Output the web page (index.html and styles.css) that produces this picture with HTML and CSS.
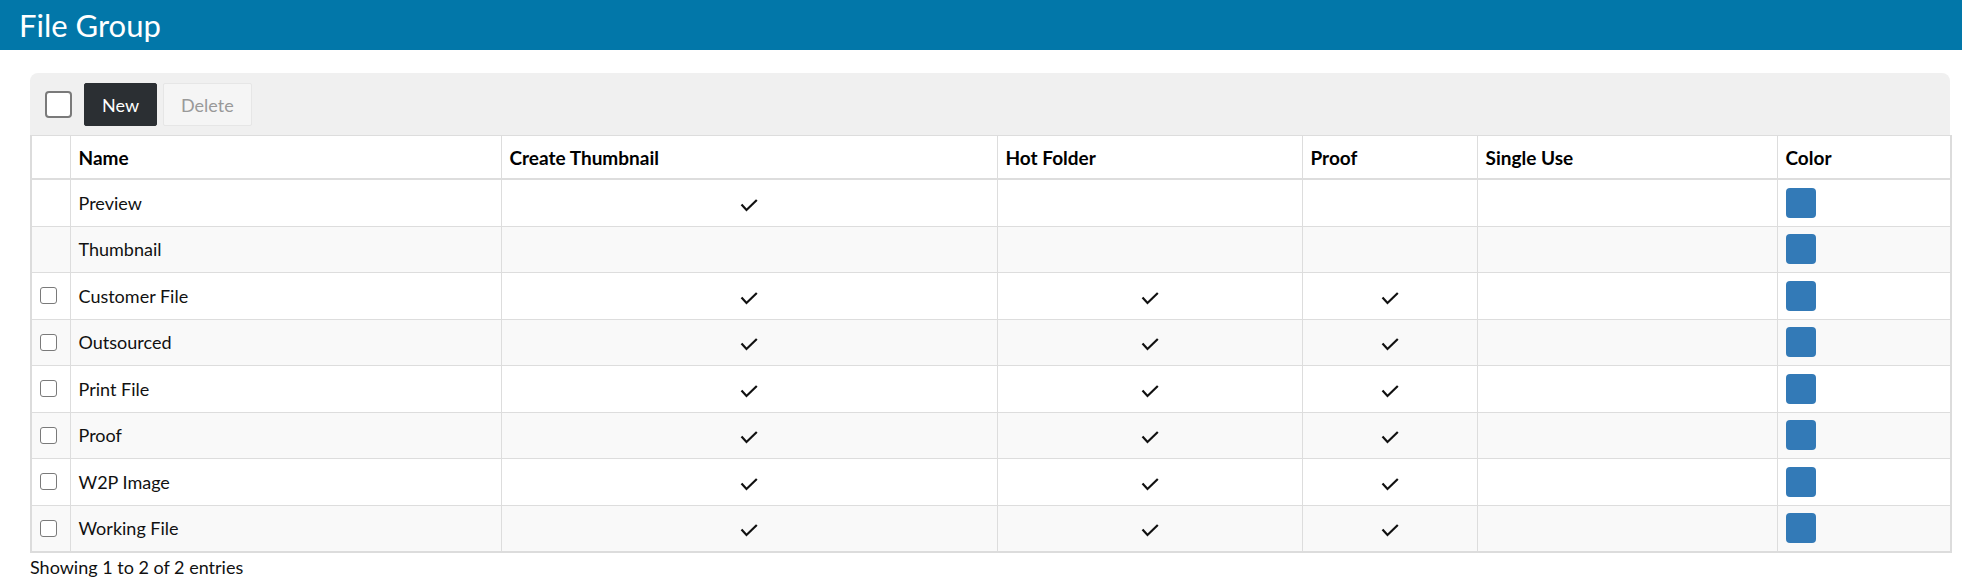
FILE: index.html
```html
<!DOCTYPE html>
<html lang="en">
<head>
  <meta charset="UTF-8" />
  <title>File Group</title>
  <link rel="stylesheet" href="styles.css">
</head>
<body>
  <svg class="sprites" width="0" height="0">
    <symbol id="tick" viewBox="0 0 18 13">
      <path d="M1.5 5.5 L6.5 11 L16.8 1" fill="none" stroke="currentColor" stroke-width="2.2" />
    </symbol>
  </svg>
  <header class="page-header">
    <h1>File Group</h1>
  </header>
  <main class="content">
    <section class="panel">
      <div class="toolbar">
        <input type="checkbox" class="check check-lg">
        <button class="btn btn-dark">New</button>
        <button class="btn btn-light" disabled>Delete</button>
      </div>
      <table class="grid">
        <colgroup>
          <col class="c-select">
          <col class="c-name">
          <col class="c-thumb">
          <col class="c-hot">
          <col class="c-proof">
          <col class="c-single">
          <col class="c-color">
        </colgroup>
        <thead>
          <tr>
            <th></th>
            <th>Name</th>
            <th>Create Thumbnail</th>
            <th>Hot Folder</th>
            <th>Proof</th>
            <th>Single Use</th>
            <th>Color</th>
          </tr>
        </thead>
        <tbody>
          <tr>
            <td></td>
            <td>Preview</td>
            <td class="mid"><svg class="tick"><use href="#tick"/></svg></td>
            <td></td>
            <td></td>
            <td></td>
            <td><span class="swatch"></span></td>
          </tr>
          <tr>
            <td></td>
            <td>Thumbnail</td>
            <td></td>
            <td></td>
            <td></td>
            <td></td>
            <td><span class="swatch"></span></td>
          </tr>
          <tr>
            <td><input type="checkbox" class="check"></td>
            <td>Customer File</td>
            <td class="mid"><svg class="tick"><use href="#tick"/></svg></td>
            <td class="mid"><svg class="tick"><use href="#tick"/></svg></td>
            <td class="mid"><svg class="tick"><use href="#tick"/></svg></td>
            <td></td>
            <td><span class="swatch"></span></td>
          </tr>
          <tr>
            <td><input type="checkbox" class="check"></td>
            <td>Outsourced</td>
            <td class="mid"><svg class="tick"><use href="#tick"/></svg></td>
            <td class="mid"><svg class="tick"><use href="#tick"/></svg></td>
            <td class="mid"><svg class="tick"><use href="#tick"/></svg></td>
            <td></td>
            <td><span class="swatch"></span></td>
          </tr>
          <tr>
            <td><input type="checkbox" class="check"></td>
            <td>Print File</td>
            <td class="mid"><svg class="tick"><use href="#tick"/></svg></td>
            <td class="mid"><svg class="tick"><use href="#tick"/></svg></td>
            <td class="mid"><svg class="tick"><use href="#tick"/></svg></td>
            <td></td>
            <td><span class="swatch"></span></td>
          </tr>
          <tr>
            <td><input type="checkbox" class="check"></td>
            <td>Proof</td>
            <td class="mid"><svg class="tick"><use href="#tick"/></svg></td>
            <td class="mid"><svg class="tick"><use href="#tick"/></svg></td>
            <td class="mid"><svg class="tick"><use href="#tick"/></svg></td>
            <td></td>
            <td><span class="swatch"></span></td>
          </tr>
          <tr>
            <td><input type="checkbox" class="check"></td>
            <td>W2P Image</td>
            <td class="mid"><svg class="tick"><use href="#tick"/></svg></td>
            <td class="mid"><svg class="tick"><use href="#tick"/></svg></td>
            <td class="mid"><svg class="tick"><use href="#tick"/></svg></td>
            <td></td>
            <td><span class="swatch"></span></td>
          </tr>
          <tr>
            <td><input type="checkbox" class="check"></td>
            <td>Working File</td>
            <td class="mid"><svg class="tick"><use href="#tick"/></svg></td>
            <td class="mid"><svg class="tick"><use href="#tick"/></svg></td>
            <td class="mid"><svg class="tick"><use href="#tick"/></svg></td>
            <td></td>
            <td><span class="swatch"></span></td>
          </tr>
        </tbody>
      </table>
    </section>
    <p class="info">Showing 1 to 2 of 2 entries</p>
  </main>
</body>
</html>
```

FILE: styles.css
```css
body {
  margin: 0;
  font-family: Lato, 'Liberation Sans', sans-serif;
  font-size: 18px;
  color: #111;
  background: #fff;
}
.sprites {
  position: absolute;
}
.page-header {
  background: #0277a9;
  height: 50px;
  display: flex;
  align-items: center;
  padding-left: 19px;
}
.page-header h1 {
  margin: 0;
  font-size: 31px;
  font-weight: normal;
  color: #fff;
}
.content {
  padding: 23px 12px 0 30px;
}
.panel {
  background: #f0f0f0;
  border-radius: 8px 8px 0 0;
}
.toolbar {
  display: flex;
  align-items: center;
  padding: 10px 15px 9px;
}
.check {
  appearance: none;
  margin: 0;
  width: 17px;
  height: 17px;
  border: 1.5px solid #7a7a7a;
  border-radius: 3px;
  background: #fff;
  display: block;
}
.check-lg {
  width: 27px;
  height: 27px;
  border-width: 2px;
  border-radius: 4px;
  margin-right: 12px;
}
.btn {
  font: inherit;
  height: 43px;
  padding: 0 17px;
  border-radius: 2px;
  margin-right: 6px;
}
.btn-dark {
  background: #2b2f33;
  color: #fff;
  border: 1px solid #2b2f33;
}
.btn-light {
  background: #f5f5f5;
  color: #999;
  border: 1px solid #e6e6e6;
}
.grid {
  width: 100%;
  border-collapse: collapse;
  table-layout: fixed;
  background: #fff;
  border: 2px solid #dcdcdc;
  border-top-width: 1px;
}
.c-select { width: 39px; }
.c-name { width: 431px; }
.c-thumb { width: 496px; }
.c-hot { width: 305px; }
.c-proof { width: 175px; }
.c-single { width: 300px; }
.c-color { width: 174px; }
.grid th,
.grid td {
  border: 1px solid #ddd;
  padding: 0 8px;
  height: 45.5px;
  text-align: left;
  vertical-align: middle;
}
.grid th {
  height: 42px;
  border-bottom: 2px solid #ddd;
  font-size: 19px;
  font-weight: bold;
  color: #000;
}
.grid tbody tr:nth-child(even) td {
  background: #f9f9f9;
}
.grid td.mid {
  text-align: center;
}
.tick {
  width: 18px;
  height: 13px;
  color: #111;
  display: inline-block;
  vertical-align: middle;
}
.swatch {
  display: block;
  width: 30px;
  height: 30px;
  border-radius: 4px;
  background: #337ab7;
}
.info {
  margin: 3px 0 0;
}
```
